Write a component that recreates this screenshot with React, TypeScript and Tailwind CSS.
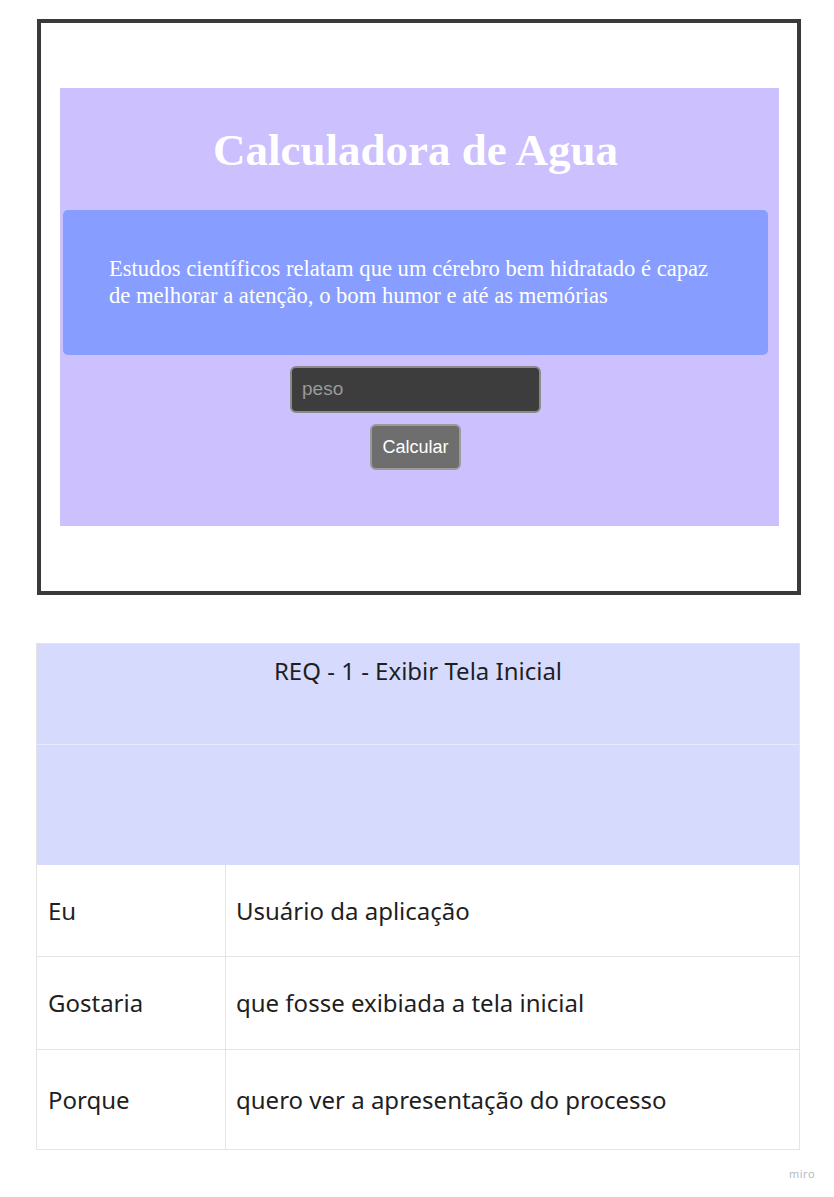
export default function App() {
  return (
    <div className="w-[834px] h-[1197px] bg-white relative">
      <div className="pt-[19px] pl-[37px]">
        <div className="w-[764px] h-[576px] border-4 border-[#3a3a3a] bg-white pt-[65px] pl-[19px]">
          <div className="w-[719px] h-[438px] bg-[#ccc0ff] flex flex-col items-center pr-[8px]">
            <h1 className="mt-[33px] text-white font-bold text-[45px] leading-[58px] font-['Liberation_Serif',serif]">Calculadora de Agua</h1>
            <div className="self-start ml-[3px] mt-[31px] w-[705px] h-[145px] bg-[#879dff] rounded-[5px] pl-[46px] pt-[45px]">
              <p className="w-[604px] text-white text-[22.6px] leading-[27px] font-['Liberation_Serif',serif]">
                Estudos científicos relatam que um cérebro bem hidratado é capaz de melhorar a atenção, o bom humor e até as memórias
              </p>
            </div>
            <div className="mt-[11px] w-[251px] h-[47px] bg-[#3d3d3d] border-2 border-[#8a8a8a] rounded-[6px] flex items-center pl-[10px] text-[19px] text-[#9a9a9a] font-['Liberation_Sans',sans-serif]">peso</div>
            <div className="mt-[11px] w-[91px] h-[46px] bg-[#6e6e6e] border-2 border-[#9a9a9a] rounded-[6px] flex items-center justify-center text-[18px] text-white font-['Liberation_Sans',sans-serif]">Calcular</div>
          </div>
        </div>
      </div>
      <div className="mt-[48px] ml-[36px] w-[764px] border border-[#e4e4e4] font-['Noto_Sans',sans-serif] text-[#1f1f1f] text-[24px]">
        <div className="h-[101px] bg-[#d6dbfe] border-b border-[#e8ebff] flex justify-center pt-[11px] leading-[32px]">REQ - 1 - Exibir Tela Inicial</div>
        <div className="h-[120px] bg-[#d6dbfe]"></div>
        <div className="grid grid-cols-[189px_1fr]">
          <div className="h-[92px] border-r border-b border-[#e4e4e4] flex items-center pl-[11px]">Eu</div>
          <div className="h-[92px] border-b border-[#e4e4e4] flex items-center pl-[10px]">Usuário da aplicação</div>
          <div className="h-[93px] border-r border-b border-[#e4e4e4] flex items-center pl-[11px]">Gostaria</div>
          <div className="h-[93px] border-b border-[#e4e4e4] flex items-center pl-[10px]">que fosse exibiada a tela inicial</div>
          <div className="h-[99px] border-r border-[#e4e4e4] flex items-center pl-[11px]">Porque</div>
          <div className="h-[99px] flex items-center pl-[10px]">quero ver a apresentação do processo</div>
        </div>
      </div>
      <div className="absolute left-[789px] top-[1166px] text-[11px] tracking-[0.5px] text-[#b8b8c4] font-['Noto_Sans',sans-serif]">miro</div>
    </div>
  );
}
